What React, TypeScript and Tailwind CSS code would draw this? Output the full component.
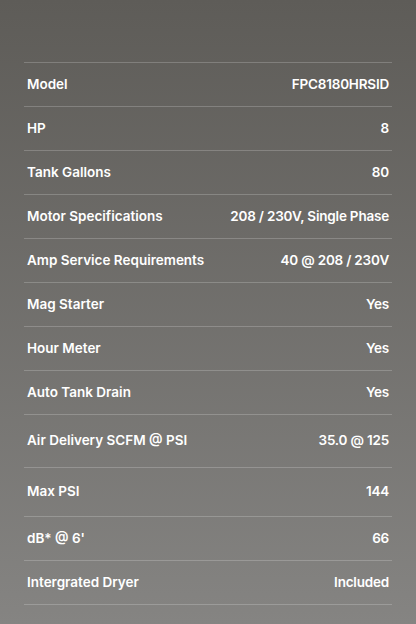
const specs: { label: string; value: string; h: string }[] = [
  { label: 'Model', value: 'FPC8180HRSID', h: 'h-[44px]' },
  { label: 'HP', value: '8', h: 'h-[44px]' },
  { label: 'Tank Gallons', value: '80', h: 'h-[44px]' },
  { label: 'Motor Specifications', value: '208 / 230V, Single Phase', h: 'h-[44px]' },
  { label: 'Amp Service Requirements', value: '40 @ 208 / 230V', h: 'h-[44px]' },
  { label: 'Mag Starter', value: 'Yes', h: 'h-[44px]' },
  { label: 'Hour Meter', value: 'Yes', h: 'h-[44px]' },
  { label: 'Auto Tank Drain', value: 'Yes', h: 'h-[44px]' },
  { label: 'Air Delivery SCFM @ PSI', value: '35.0 @ 125', h: 'h-[53px]' },
  { label: 'Max PSI', value: '144', h: 'h-[49px]' },
  { label: 'dB* @ 6\'', value: '66', h: 'h-[44px]' },
  { label: 'Intergrated Dryer', value: 'Included', h: 'h-[44px]' },
];

export default function App() {
  return (
    <div
      className="w-[416px] h-[624px] overflow-hidden bg-gradient-to-b from-[#5e5c58] to-[#858482] px-6 pt-[62px]"
      style={{ fontFamily: 'Inter, "Liberation Sans", sans-serif' }}
    >
      <div className="border-t border-white/20">
        {specs.map((row) => (
          <div
            key={row.label}
            className={`${row.h} flex items-center justify-between border-b border-white/20 px-[3px] pb-[1px] text-[13.5px] font-semibold text-white`}
          >
            <span>{row.label}</span>
            <span className="tracking-[-0.2px]">{row.value}</span>
          </div>
        ))}
      </div>
    </div>
  );
}
